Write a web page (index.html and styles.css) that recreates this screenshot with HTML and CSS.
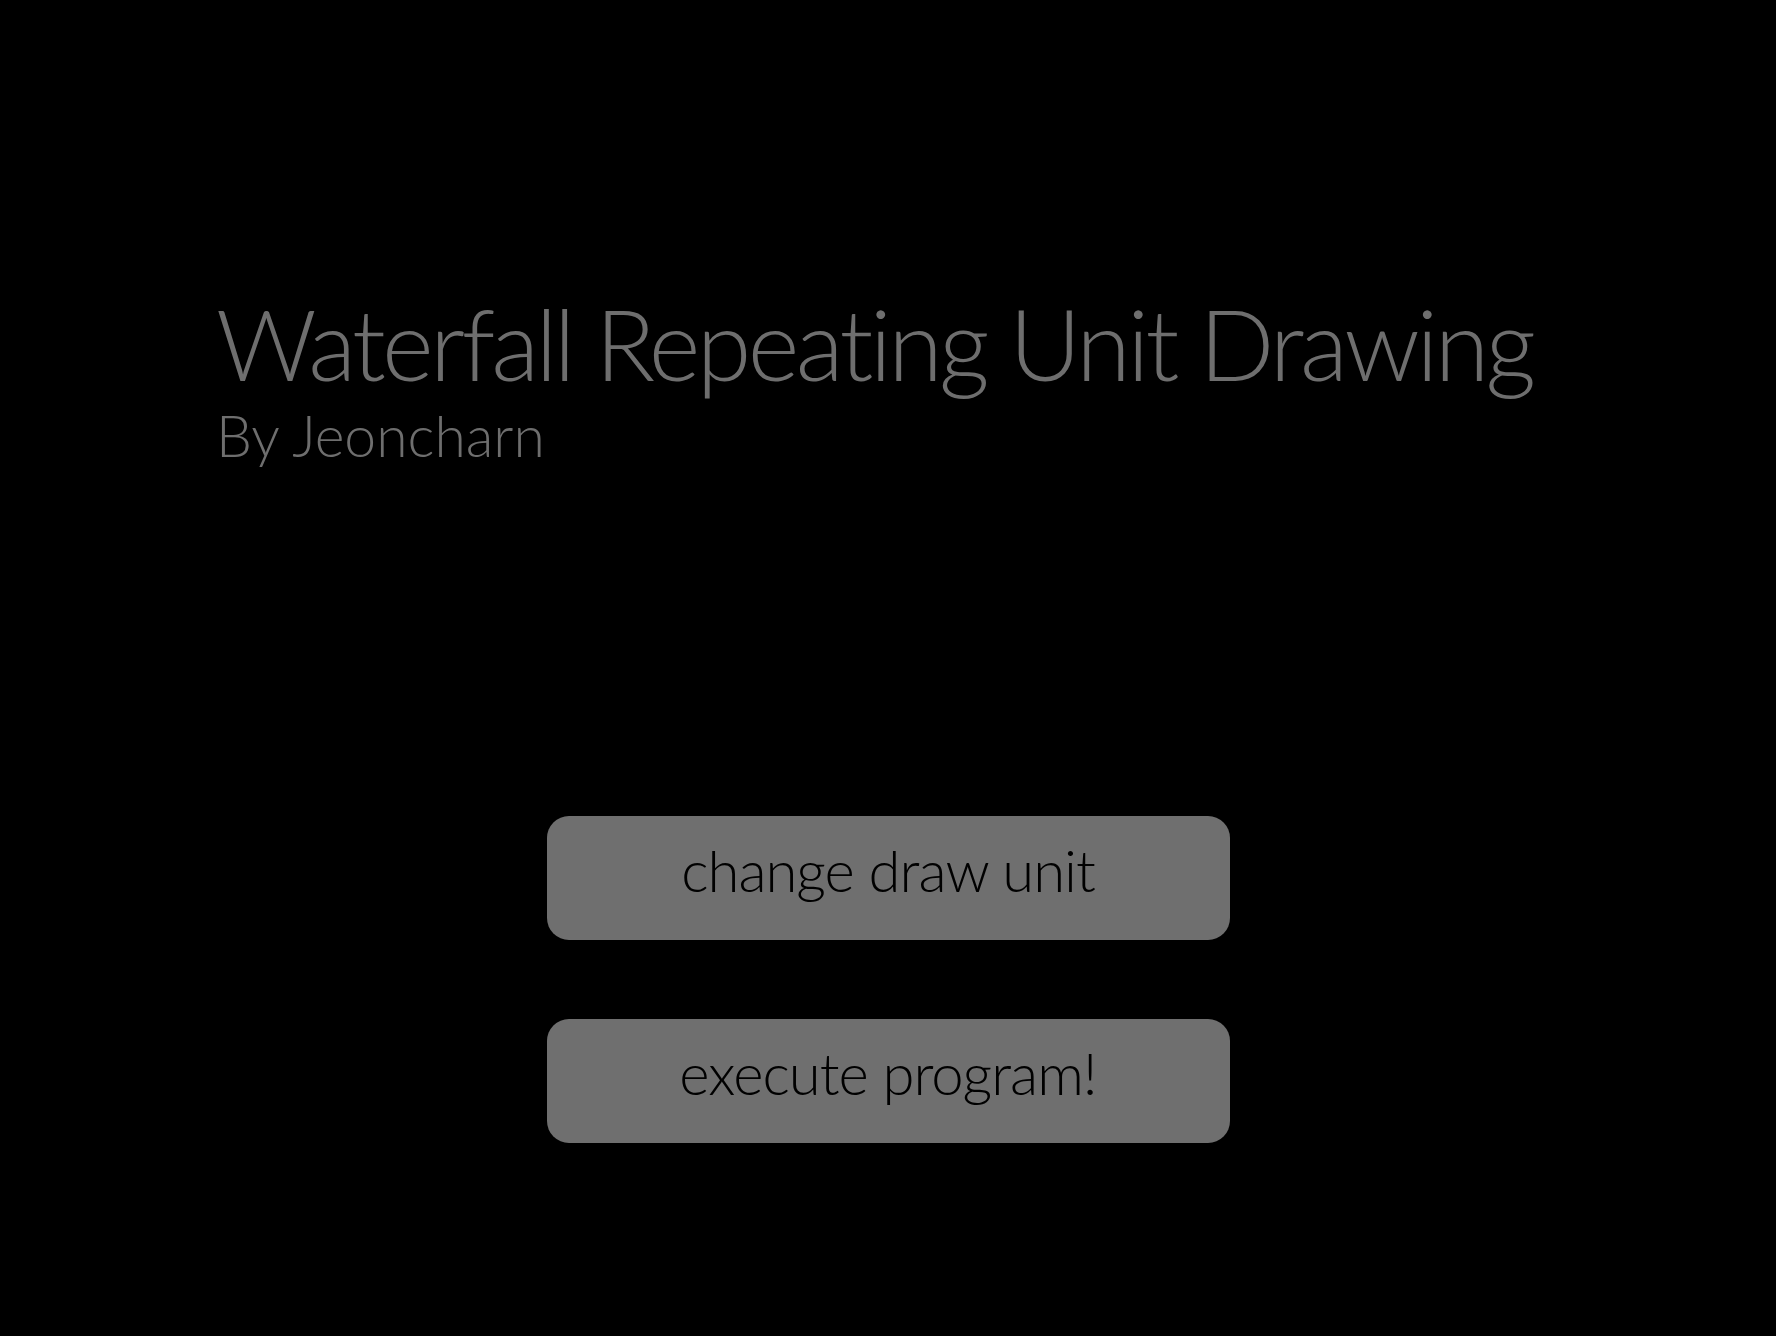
FILE: index.html
```html
<!DOCTYPE html>
<html>
<head>
<meta charset="utf-8">
<link rel="stylesheet" href="styles.css">
</head>
<body>
<div class="screen">
  <header class="heading">
    <h1 class="title">Waterfall Repeating Unit Drawing</h1>
    <p class="author">By Jeoncharn</p>
  </header>
  <nav class="menu">
    <button class="btn">change draw unit</button>
    <button class="btn">execute program!</button>
  </nav>
</div>
</body>
</html>
```

FILE: styles.css
```css
html, body {
  margin: 0;
  padding: 0;
  background: #000;
}
.screen {
  width: 1776px;
  height: 1336px;
  background: #000;
  font-family: "Lato", "Liberation Sans", sans-serif;
  display: flex;
  flex-direction: column;
  overflow: hidden;
}
.heading {
  padding: 288px 0 0 216px;
}
.title {
  margin: 0;
  font-weight: 300;
  font-size: 99px;
  line-height: 110px;
  letter-spacing: -3.6px;
  color: #6e6e6e;
}
.author {
  margin: 5px 0 0 0;
  font-weight: 300;
  font-size: 57px;
  line-height: 64px;
  color: #6e6e6e;
}
.menu {
  margin-top: 349px;
  display: flex;
  flex-direction: column;
  align-items: center;
  gap: 79px;
}
.btn {
  width: 683px;
  height: 124px;
  border: none;
  border-radius: 22px;
  background: #6f6f6f;
  color: #000;
  font-family: "Lato", "Liberation Sans", sans-serif;
  font-weight: 300;
  font-size: 58px;
  letter-spacing: -1px;
  padding: 0 0 18px 0;
}
```
